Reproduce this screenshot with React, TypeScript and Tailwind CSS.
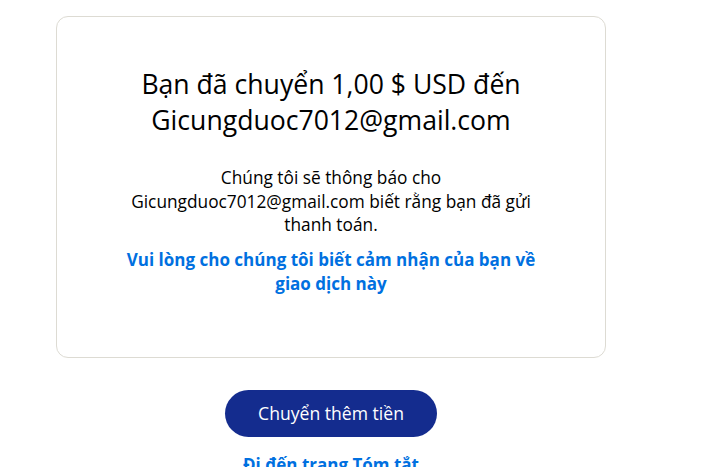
export default function App() {
  return (
    <div
      className="min-h-screen bg-white text-[#001435]"
      style={{ fontFamily: '"Open Sans", "Noto Sans", sans-serif' }}
    >
      <div className="w-[550px] ml-[56px] pt-[16px] flex flex-col items-center">
        {/* Confirmation card */}
        <div className="w-full h-[342px] rounded-[12px] border border-[#dddbd3] bg-white flex flex-col items-center pt-[49px]">
          <h1 className="w-[420px] text-center text-[26.6px] leading-[36px] text-black">
            Bạn đã chuyển 1,00 $ USD đến Gicungduoc7012@gmail.com
          </h1>
          <p className="w-[410px] mt-[28px] text-center text-[17.3px] leading-[23.5px] font-medium text-black">
            Chúng tôi sẽ thông báo cho Gicungduoc7012@gmail.com biết rằng bạn đã gửi thanh toán.
          </p>
          <a
            href="#"
            className="w-[420px] mt-[11px] text-center text-[17px] leading-[24px] font-bold text-[#0070e0]"
          >
            Vui lòng cho chúng tôi biết cảm nhận của bạn về giao dịch này
          </a>
        </div>

        {/* Actions */}
        <button className="mt-[32px] w-[212px] h-[47px] rounded-full bg-[#142c8e] text-white text-[17.6px]">
          Chuyển thêm tiền
        </button>
        <a href="#" className="mt-[15px] text-[17px] font-bold text-[#0070e0]">
          Đi đến trang Tóm tắt
        </a>
      </div>
    </div>
  );
}
